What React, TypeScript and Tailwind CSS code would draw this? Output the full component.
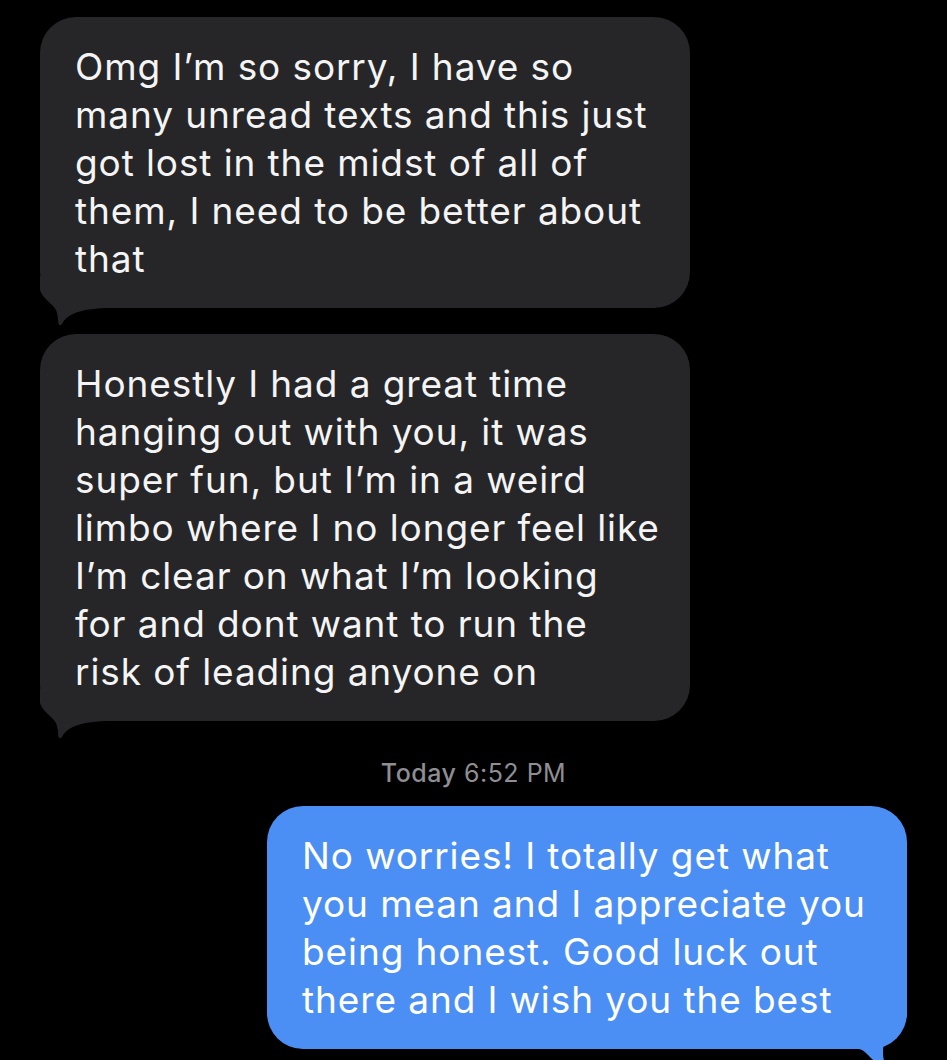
import React from 'react';

const font = { fontFamily: "Inter, 'Noto Sans', sans-serif" };

const incoming = [
  ['Omg I’m so sorry, I have so', 'many unread texts and this just', 'got lost in the midst of all of', 'them, I need to be better about', 'that'],
  [
    'Honestly I had a great time',
    'hanging out with you, it was',
    'super fun, but I’m in a weird',
    'limbo where I no longer feel like',
    'I’m clear on what I’m looking',
    'for and dont want to run the',
    'risk of leading anyone on',
  ],
];

const outgoing = ['No worries! I totally get what', 'you mean and I appreciate you', 'being honest. Good luck out', 'there and I wish you the best'];

// grey tail hangs off the bottom-left corner
function LeftTail() {
  return (
    <svg width="70" height="50" viewBox="0 0 70 50" className="absolute left-0 bottom-[-18px]">
      <path
        d="M0,0 V14 C2,22 12,27 16,34 C18,39 18,44 18.5,48 C19,49.5 21,49.5 22,48 C26,40 36,33 66,32 H70 V0 Z"
        fill="#262628"
      />
    </svg>
  );
}

// blue tail, drawn from the right edge (mirrored)
function RightTail() {
  return (
    <svg width="70" height="70" viewBox="0 0 70 70" className="absolute right-0 bottom-[-30px] -scale-x-100">
      <path
        d="M0,0 V5 C0,15 12,22 18,27 C23,31 24,37 24,44 C24,50 22,56 20,60 C24,59 30,55 36,49 C40,45 43,41 48,40 H70 V0 Z"
        fill="#4b8ff5"
      />
    </svg>
  );
}

function Bubble({ lines, out }: { lines: string[]; out?: boolean }) {
  return (
    <div
      className={
        out
          ? 'relative w-[640px] self-end rounded-[36px] bg-[#4b8ff5] pl-[35px] pr-6 pt-[26px] pb-[25px] text-white'
          : 'relative w-[650px] rounded-[36px] bg-[#262628] pl-[35px] pr-6 pt-[26px] pb-[25px] text-[#f4f4f4]'
      }
    >
      {out ? <RightTail /> : <LeftTail />}
      <div className="relative text-[37px] leading-[48px] tracking-[0.9px]">
        {lines.map(l => (
          <div key={l} className="whitespace-nowrap">{l}</div>
        ))}
      </div>
    </div>
  );
}

export default function App() {
  return (
    <div className="h-[1060px] overflow-hidden bg-black px-10 pt-[17px]" style={font}>
      <div className="flex flex-col">
        <Bubble lines={incoming[0]} />
        <div className="h-[26px]" />
        <Bubble lines={incoming[1]} />
        <div className="mt-[38px] mb-[19px] text-center text-[25px] leading-[28px] tracking-[0.5px] text-[#8e8e93]">
          <span className="font-medium">Today</span> 6:52 PM
        </div>
        <Bubble lines={outgoing} out />
      </div>
    </div>
  );
}
